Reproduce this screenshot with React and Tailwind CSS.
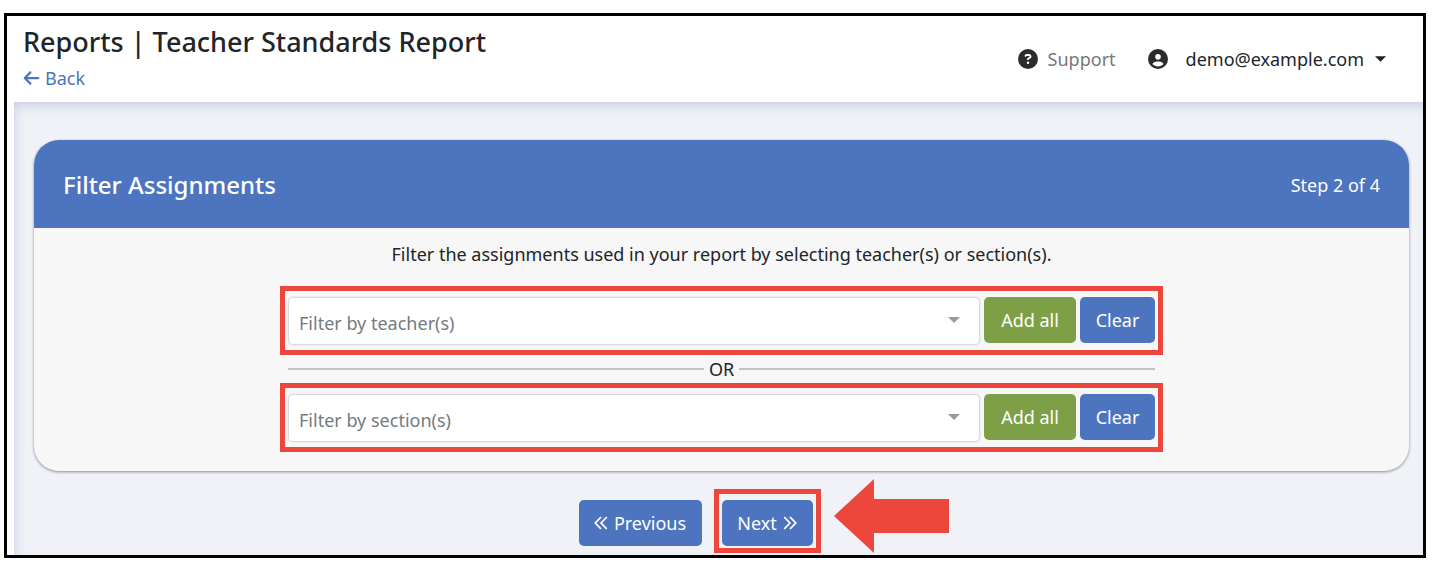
import React from "react";
import { FaArrowLeft, FaCircleQuestion, FaCircleUser } from "react-icons/fa6";

const buttonBase = "h-[46px] shrink-0 rounded-[5px] text-lg text-white whitespace-nowrap";

function Caret({ className }) {
  return (
    <svg viewBox="0 0 12 6" className={className} aria-hidden="true">
      <path d="M0 0h12L6 6z" fill="currentColor" />
    </svg>
  );
}

function DoubleChevron({ flipped }) {
  return (
    <svg viewBox="0 0 14 14" className="h-[14px] w-[14px]" aria-hidden="true">
      <path
        d={flipped ? "M7 1 1.3 7 7 13M12.8 1 7.1 7l5.7 6" : "M1.2 1 6.9 7l-5.7 6M7 1l5.7 6L7 13"}
        fill="none"
        stroke="currentColor"
        strokeWidth="1.8"
      />
    </svg>
  );
}

function FilterRow({ id, label }) {
  return (
    <div className="flex items-start gap-1 border-[5px] border-[#ed463c] px-[3px] pt-[6px] pb-[5px]">
      <div className="relative min-w-0 flex-1">
        <select
          id={id}
          aria-label={label}
          defaultValue=""
          className="block h-12 w-full appearance-none rounded-[5px] border border-[#d6d9e0] bg-white px-[10px] pt-1 text-lg text-[#757a80] shadow-[0_0_0_1px_#eceef1]"
        >
          <option value="">{label}</option>
        </select>
        <Caret className="pointer-events-none absolute top-5 right-5 h-[6px] w-3 text-[#999999]" />
      </div>
      <button type="button" className={`${buttonBase} w-[92px] bg-[#7da047]`}>Add all</button>
      <button type="button" className={`${buttonBase} w-[75px] bg-[#4c74bf]`}>Clear</button>
    </div>
  );
}

export default function App() {
  return (
    <div className="bg-white pt-[13px] pr-[10px] pb-[6px] pl-1 font-['Noto_Sans','Open_Sans',sans-serif] text-lg text-[#212529]">
      <div className="border-[3px] border-black">
        <header className="flex h-[86px] items-center justify-between pr-[37px] pl-4">
          <div className="pt-px">
            <h1 className="text-[27px] leading-9 font-medium">Reports | Teacher Standards Report</h1>
            <a href="#back" className="flex items-center gap-[5px] leading-9 text-[#4c74bf]">
              <FaArrowLeft className="h-[18px] w-[17px]" />
              Back
            </a>
          </div>
          <nav className="flex items-center">
            <a href="#support" className="flex items-center gap-[10px] text-[#777777]">
              <FaCircleQuestion className="h-5 w-5 text-[#2b2b2b]" />
              Support
            </a>
            <button type="button" className="ml-8 flex items-center">
              <FaCircleUser className="mr-[18px] h-5 w-5 text-[#2b2b2b]" />
              demo@example.com
              <Caret className="ml-[11px] h-[6px] w-[11px]" />
            </button>
          </nav>
        </header>

        <main className="ml-[7px] bg-[#f0f2f7] pt-[38px] pr-[14px] pb-[2px] pl-5 shadow-[inset_3px_6px_12px_-3px_#c5cae3]">
          <section className="overflow-hidden rounded-[25px] bg-[#f7f7f7] shadow-[0_1px_3px_#888c94]">
            <div className="flex h-[88px] items-center justify-between bg-[#4c74bf] pt-[2px] pr-[29px] pl-[29px] text-white">
              <h2 className="text-2xl font-medium">Filter Assignments</h2>
              <span>Step 2 of 4</span>
            </div>
            <div className="flex flex-col items-center pt-3 pb-[19px]">
              <p className="mb-[18px] text-center leading-7">
                Filter the assignments used in your report by selecting teacher(s) or section(s).
              </p>
              <div className="w-full max-w-[883px]">
                <FilterRow id="teachers" label="Filter by teacher(s)" />
                <div className="flex items-center gap-[5px] px-2 leading-7">
                  <span className="h-[2px] flex-1 bg-[#c0c3c8]" />
                  OR
                  <span className="h-[2px] flex-1 bg-[#c0c3c8]" />
                </div>
                <FilterRow id="sections" label="Filter by section(s)" />
              </div>
            </div>
          </section>

          <div className="mt-[18px] flex items-start justify-center gap-3 pr-11">
            <button type="button" className={`${buttonBase} mt-[11px] flex w-[123px] items-center justify-center gap-[6px] bg-[#4c74bf]`}>
              <DoubleChevron flipped />
              Previous
            </button>
            <div className="relative border-[5px] border-[#ed463c] px-[3px] pt-[6px] pb-[2px]">
              <button type="button" className={`${buttonBase} flex w-[91px] items-center justify-center gap-[6px] bg-[#4c74bf]`}>
                Next
                <DoubleChevron />
              </button>
              <svg
                viewBox="0 0 115 74"
                className="absolute -top-[15px] left-[115px] h-[74px] w-[115px] text-[#ed463c]"
                aria-hidden="true"
              >
                <path d="M0 37 40 0v20h75v34H40v20z" fill="currentColor" />
              </svg>
            </div>
          </div>
        </main>
      </div>
    </div>
  );
}
